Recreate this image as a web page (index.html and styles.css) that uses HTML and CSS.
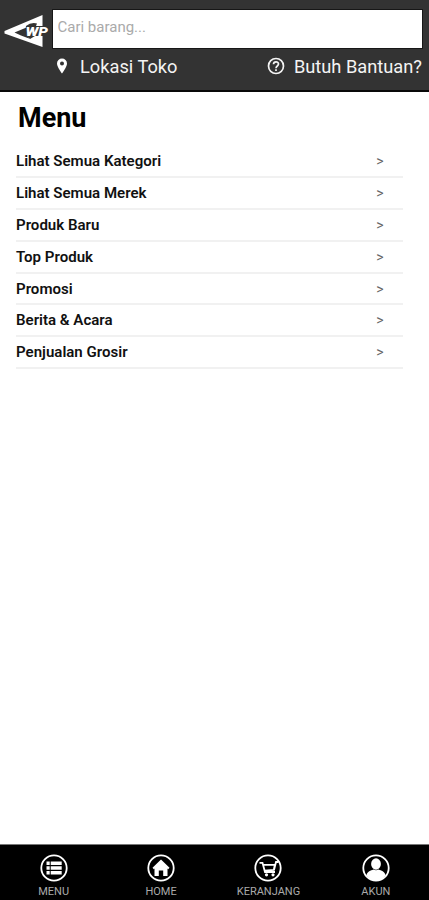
FILE: index.html
```
<!DOCTYPE html>
<html lang="id">
<head>
<meta charset="utf-8">
<meta name="viewport" content="width=device-width, initial-scale=1">
<title>Menu</title>
<link rel="stylesheet" href="styles.css">
</head>
<body>
<header class="header">
  <svg class="logo" viewBox="0 0 46 34" aria-label="WP">
    <path fill="#fff" fill-rule="evenodd" d="M.5 16 38.500 0V32L.5 18.500ZM10.500 17.500 17 20.500 25 23.500 22 18 23 13.500 32 8.500Z"/>
    <path fill="#333" d="M22 11Q27 7 33 8.500L32 11H39V21H31L26 24Q20 20 22 11Z"/>
    <text class="logo-text" x="21.500" y="20.800" textLength="22.500" lengthAdjust="spacingAndGlyphs">WP</text>
  </svg>
  <div class="header-main">
    <input class="search" type="text" placeholder="Cari barang..." aria-label="Cari barang">
    <div class="links">
      <a class="link"><svg class="pin" viewBox="0 0 12 16"><path fill="#fff" fill-rule="evenodd" d="M6 .5a5 5 0 0 0-5 5C1 9 6 15.500 6 15.500S11 9 11 5.500a5 5 0 0 0-5-5Zm0 3a2 2 0 1 1 0 4 2 2 0 0 1 0-4Z"/></svg><span>Lokasi Toko</span></a>
      <a class="link"><svg class="help" viewBox="0 0 18 18" fill="none" stroke="#f4f4f4"><circle cx="9" cy="9" r="7.500" stroke-width="1.700"/><path stroke-width="1.700" d="M6.500 7.300C6.500 4 11.500 4 11.500 7.100 11.500 9 9 9 9 11.200M9 12.200v1.700"/></svg><span>Butuh Bantuan?</span></a>
    </div>
  </div>
</header>
<main class="content">
  <h1 class="title">Menu</h1>
  <ul class="menu">
    <li class="row"><span>Lihat Semua Kategori</span><span class="arrow">&gt;</span></li>
    <li class="row"><span>Lihat Semua Merek</span><span class="arrow">&gt;</span></li>
    <li class="row"><span>Produk Baru</span><span class="arrow">&gt;</span></li>
    <li class="row"><span>Top Produk</span><span class="arrow">&gt;</span></li>
    <li class="row"><span>Promosi</span><span class="arrow">&gt;</span></li>
    <li class="row"><span>Berita &amp; Acara</span><span class="arrow">&gt;</span></li>
    <li class="row"><span>Penjualan Grosir</span><span class="arrow">&gt;</span></li>
  </ul>
</main>
<nav class="tabs">
  <a class="tab"><svg class="tab-icon" viewBox="0 0 28 28"><circle class="ring" cx="14" cy="14" r="12.700"/><path fill="#fff" d="M6.500 7.500h3.200v3.500H6.500zm4.200 0h11v3.500h-11zm-4.200 4.800h3.200v3.500H6.500zm4.200 0h11v3.500h-11zM6.500 17.100h3.200v3.500H6.500zm4.200 0h11v3.500h-11z"/></svg><span>MENU</span></a>
  <a class="tab"><svg class="tab-icon" viewBox="0 0 28 28"><circle class="ring" cx="14" cy="14" r="12.700"/><path fill="#fff" d="m14 5.500 8.500 8.300-1.300 1.400-.7-.6V22h-4.300v-5.500h-4.400V22H7.500v-7.400l-.7.600-1.300-1.400Z"/></svg><span>HOME</span></a>
  <a class="tab"><svg class="tab-icon" viewBox="0 0 28 28"><circle class="ring" cx="14" cy="14" r="12.700"/><path fill="none" stroke="#fff" stroke-width="1.800" d="M5.500 8.800h3L11 18h10M8.800 10.800h12l-1 5.200-9.300.7M20 16l2-8h2.500"/><circle cx="12.500" cy="20.800" r="1.600" fill="#fff"/><circle cx="19" cy="20.800" r="1.600" fill="#fff"/></svg><span>KERANJANG</span></a>
  <a class="tab"><svg class="tab-icon" viewBox="0 0 28 28"><circle class="ring" cx="14" cy="14" r="12.700"/><ellipse cx="14" cy="10" rx="4.900" ry="5.800" fill="#fff"/><path fill="#fff" d="M4.500 21c1-3.500 4-4.500 7-5.500q2.500 1.500 5 0c3 1 6 2 7 5.500C21 25 18 26.500 14 26.500S7 25 4.500 21Z"/></svg><span>AKUN</span></a>
</nav>
</body>
</html>
```

FILE: styles.css
```
* { box-sizing: border-box; }
body {
  margin: 0;
  height: 100vh;
  display: flex;
  flex-direction: column;
  background: #fff;
  color: #111;
  font-family: Roboto, sans-serif;
}
.header {
  display: flex;
  height: 92px;
  padding: 10px 7px 0 4px;
  background: #333;
  border-bottom: 2px solid #090909;
}
.logo { width: 46px; height: 34px; margin-top: 5px; flex: none; }
.logo-text {
  font: italic 900 13px Roboto, sans-serif;
  fill: #fff;
}
.header-main { flex: 1; margin-left: 3px; min-width: 0; }
.search {
  display: block;
  width: 100%;
  height: 38px;
  padding: 0 4.500px 4px;
  border: 0;
  border-radius: 0;
  background: #fff;
  box-shadow: 0 0 0 1px #171717;
  font: 15px Roboto, sans-serif;
}
.search::placeholder { color: #aaa; opacity: 1; }
.links { display: flex; justify-content: space-between; height: 36px; padding-left: 3px; }
.link { display: flex; align-items: center; height: 36px; color: #f4f4f4; font-size: 18.250px; white-space: nowrap; }
.pin { width: 12px; height: 16px; margin-right: 12px; }
.help { width: 18px; height: 18px; margin-right: 9px; }
.content { flex: 1; padding: 0 26px 0 16px; }
.title { margin: 10px 0 0 2px; font-size: 27px; line-height: 32px; font-weight: 700; color: #000; }
.menu { list-style: none; margin: 12.500px 0 0; padding: 0; }
.row {
  display: flex;
  justify-content: space-between;
  align-items: center;
  height: 31.800px;
  padding-right: 19.500px;
  border-bottom: 2px solid #f1f1f1;
  font-size: 15.050px;
  font-weight: 600;
}
.arrow { font-size: 14px; font-weight: 400; color: #666; }
.tabs { display: flex; height: 56px; background: #000; border-top: 1px solid #777; }
.tab { flex: 0 0 107.400px; display: flex; flex-direction: column; align-items: center; padding-top: 9px; color: #aaa; font-size: 11px; line-height: 13px; }
.tab-icon { width: 28px; height: 28px; margin-bottom: 3px; }
.ring { fill: none; stroke: #fff; stroke-width: 1.800; }
```
